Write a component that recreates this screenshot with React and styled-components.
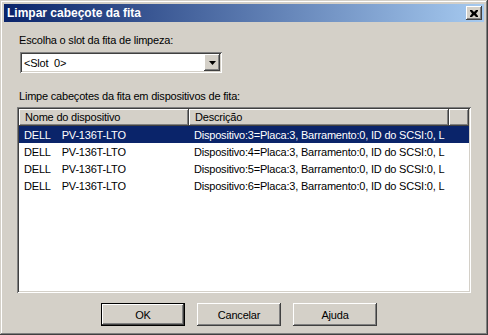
import styled, { createGlobalStyle } from "styled-components";

const GlobalStyle = createGlobalStyle`
  html, body {
    margin: 0;
    padding: 0;
    background: #d4d0c8;
  }
  * {
    box-sizing: border-box;
  }
`;

const raised = `
  box-shadow: inset -1px -1px #404040, inset 1px 1px #ffffff,
    inset -2px -2px #808080, inset 2px 2px #d4d0c8;
`;

const sunken = `
  box-shadow: inset 1px 1px #808080, inset -1px -1px #ffffff,
    inset 2px 2px #404040, inset -2px -2px #d4d0c8;
`;

const Window = styled.div`
  width: 488px;
  height: 335px;
  padding: 4px;
  background: #d4d0c8;
  font-family: "Liberation Sans", Arial, sans-serif;
  font-size: 11px;
  letter-spacing: -0.2px;
  color: #000;
  display: flex;
  flex-direction: column;
  box-shadow: inset -1px -1px #404040, inset 1px 1px #d4d0c8,
    inset -2px -2px #808080, inset 2px 2px #ffffff;
`;

const TitleBar = styled.div`
  height: 18px;
  display: flex;
  align-items: center;
  justify-content: space-between;
  padding: 0 2px 0 3px;
  background: linear-gradient(to right, #0a246a, #a6caf0);
`;

const Title = styled.span`
  color: #fff;
  font-weight: bold;
  font-size: 12px;
  letter-spacing: 0;
`;

const CloseButton = styled.div`
  width: 16px;
  height: 14px;
  background: #d4d0c8;
  display: flex;
  align-items: center;
  justify-content: center;
  ${raised}
`;

const Body = styled.div`
  flex: 1;
  display: flex;
  flex-direction: column;
  padding: 12px 13px 5px 13px;
`;

const Label = styled.div`
  height: 13px;
  line-height: 13px;
  padding-left: 2px;
  margin-bottom: ${(p) => p.$gap}px;
`;

const Combo = styled.div`
  width: 202px;
  height: 21px;
  margin-left: 3px;
  background: #fff;
  display: flex;
  align-items: center;
  justify-content: space-between;
  padding: 2px;
  margin-bottom: 17px;
  ${sunken}
`;

const ComboText = styled.span`
  padding-left: 2px;
  white-space: pre;
`;

const DropButton = styled.div`
  width: 16px;
  height: 17px;
  background: #d4d0c8;
  display: flex;
  align-items: center;
  justify-content: center;
  ${raised}
`;

const ListView = styled.div`
  height: 186px;
  background: #fff;
  padding: 2px;
  display: flex;
  flex-direction: column;
  overflow: hidden;
  ${sunken}
`;

const HeaderRow = styled.div`
  display: flex;
  height: 17px;
  flex-shrink: 0;
`;

const HeaderCell = styled.div`
  width: ${(p) => p.$w}px;
  flex: ${(p) => (p.$fill ? 1 : "none")};
  background: #d4d0c8;
  padding-left: 6px;
  line-height: 16px;
  white-space: nowrap;
  overflow: hidden;
  box-shadow: inset -1px -1px #404040, inset 1px 1px #ffffff,
    inset -2px -2px #808080;
`;

const Row = styled.div`
  display: flex;
  height: 17px;
  align-items: center;
  background: ${(p) => (p.$selected ? "#0a246a" : "transparent")};
  color: ${(p) => (p.$selected ? "#fff" : "#000")};
`;

const Cell = styled.div`
  width: ${(p) => p.$w}px;
  flex-shrink: 0;
  padding-left: 5px;
  white-space: pre;
  overflow: hidden;
`;

const ButtonBar = styled.div`
  display: flex;
  justify-content: center;
  gap: 12px;
  margin-top: 10px;
  padding-right: 10px;
`;

const Button = styled.div`
  width: 84px;
  height: 23px;
  display: flex;
  align-items: center;
  justify-content: center;
  background: #d4d0c8;
  ${(p) =>
    p.$default
      ? `box-shadow: inset 0 0 0 1px #000, inset -2px -2px #404040, inset 2px 2px #ffffff,
    inset -3px -3px #808080;`
      : raised}
`;

const devices = [3, 4, 5, 6];

export default function App() {
  return (
    <>
      <GlobalStyle />
      <Window>
        <TitleBar>
          <Title>Limpar cabeçote da fita</Title>
          <CloseButton>
            <svg width="8" height="7" viewBox="0 0 8 7">
              <path
                d="M0 0h2l2 2 2-2h2v1L6 3.5 8 6v1H6L4 5 2 7H0V6l2-2.5L0 1z"
                fill="#000"
              />
            </svg>
          </CloseButton>
        </TitleBar>
        <Body>
          <Label $gap={5}>Escolha o slot da fita de limpeza:</Label>
          <Combo>
            <ComboText>{"<Slot  0>"}</ComboText>
            <DropButton>
              <svg width="7" height="4" viewBox="0 0 7 4">
                <path d="M0 0h7L3.5 4z" fill="#000" />
              </svg>
            </DropButton>
          </Combo>
          <Label $gap={4}>Limpe cabeçotes da fita em dispositivos de fita:</Label>
          <ListView>
            <HeaderRow>
              <HeaderCell $w={170}>Nome do dispositivo</HeaderCell>
              <HeaderCell $w={260}>Descrição</HeaderCell>
              <HeaderCell $fill />
            </HeaderRow>
            {devices.map((n, i) => (
              <Row key={n} $selected={i === 0}>
                <Cell $w={170}>{"DELL    PV-136T-LTO"}</Cell>
                <Cell $w={260}>
                  {`Dispositivo:${n}=Placa:3, Barramento:0, ID do SCSI:0, L`}
                </Cell>
              </Row>
            ))}
          </ListView>
          <ButtonBar>
            <Button $default>OK</Button>
            <Button>Cancelar</Button>
            <Button>Ajuda</Button>
          </ButtonBar>
        </Body>
      </Window>
    </>
  );
}
